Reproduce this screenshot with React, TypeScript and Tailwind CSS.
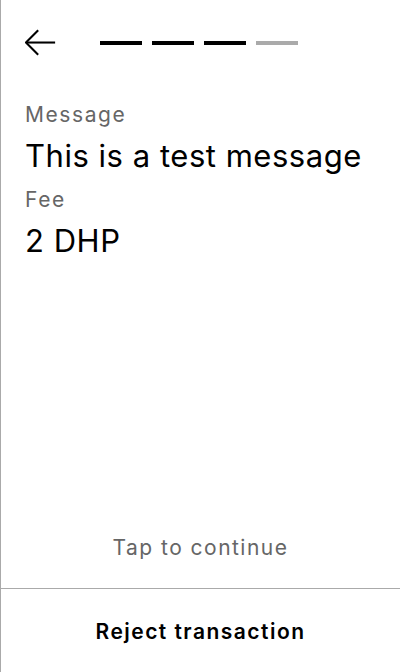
export default function App() {
  const steps = [true, true, true, false]

  return (
    <div
      className="flex h-[672px] w-[400px] flex-col border-l border-[#aaaaaa] bg-white text-black"
      style={{ fontFamily: "Inter, 'Noto Sans', sans-serif" }}
    >
      {/* Header */}
      <div className="flex h-[86px] items-center pl-6">
        <button className="flex h-8 w-8 items-center" aria-label="Back">
          <svg width="34" height="30" viewBox="0 0 34 30" fill="none" stroke="black" strokeWidth="2.2">
            <path d="M1 14.5H32" />
            <path d="M14 1.5L1 14.5L14 27.5" />
          </svg>
        </button>
        <div className="ml-[43px] flex gap-[10px]">
          {steps.map((done, i) => (
            <div key={i} className={done ? "h-1 w-[42px] bg-black" : "h-1 w-[42px] bg-[#aaaaaa]"} />
          ))}
        </div>
      </div>

      {/* Details */}
      <div className="px-6 pt-[15px]">
        <p className="text-[21px] leading-[28px] tracking-[0.075em] text-[#666666]">Message</p>
        <p className="mt-[9px] text-[31px] leading-[36px] tracking-[0.017em]">This is a test message</p>
        <p className="mt-[12px] text-[21px] leading-[28px] tracking-[0.075em] text-[#666666]">Fee</p>
        <p className="mt-[9px] text-[31px] leading-[36px] tracking-[0.017em]">2 DHP</p>
      </div>

      <div className="flex-1" />

      {/* Footer */}
      <p className="pb-[26px] text-center text-[21px] leading-[28px] tracking-[0.07em] text-[#666666]">Tap to continue</p>
      <div className="border-t border-[#aaaaaa]">
        <button className="flex h-[83px] w-full items-center justify-center pt-[2px] text-[21px] font-semibold leading-[28px] tracking-[0.07em]">
          Reject transaction
        </button>
      </div>
    </div>
  )
}
